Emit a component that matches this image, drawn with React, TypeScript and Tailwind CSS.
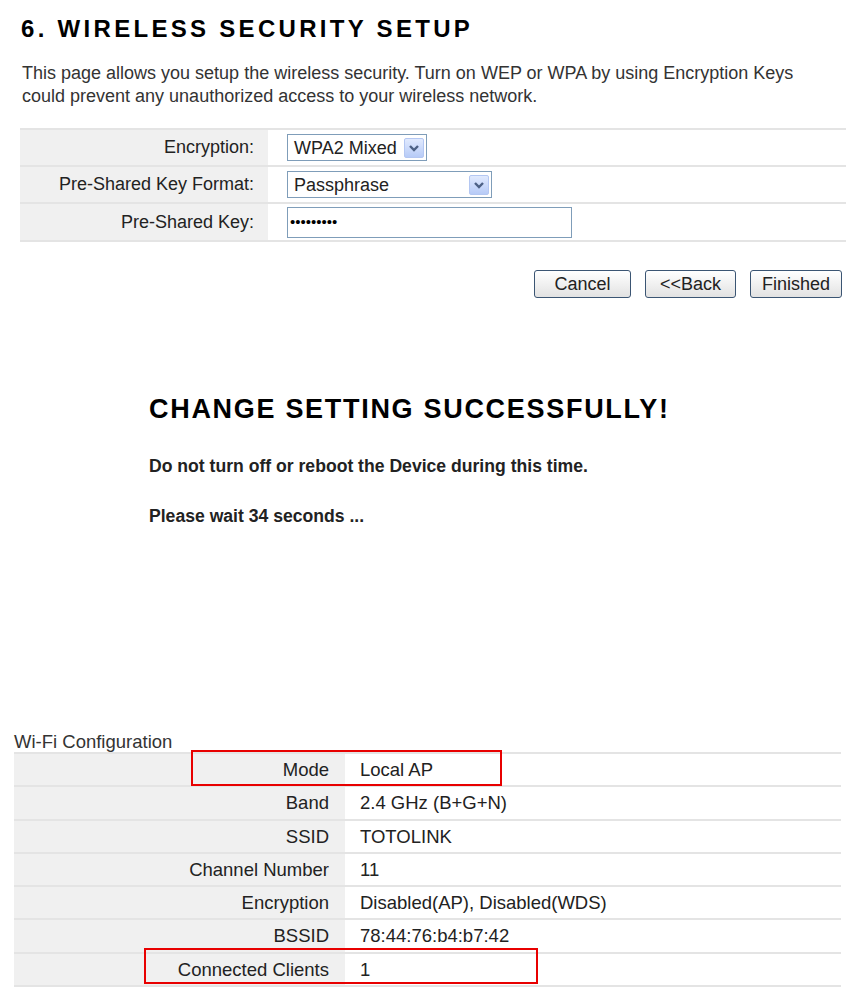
import type { ReactNode } from "react"

function Arrow() {
  return (
    <div className="w-[20px] h-[20px] mr-[2px] flex items-center justify-center rounded-[2px] border border-[#b4c7f2] bg-linear-to-b from-[#e1eafe] to-[#b7cbf7]">
      <svg width="14" height="14" viewBox="0 0 14 14">
        <path d="M3 5 L7 9 L11 5" fill="none" stroke="#4d6185" strokeWidth="2.4" />
      </svg>
    </div>
  )
}

function Select({ value, width }: { value: string; width: string }) {
  return (
    <div className={`${width} h-[27px] border border-[#7f9db9] bg-white flex items-center`}>
      <span className="flex-1 pl-[6px] text-[18px] leading-none text-[#222]">{value}</span>
      <Arrow />
    </div>
  )
}

function SetupRow({ label, height, children }: { label: string; height: string; children: ReactNode }) {
  return (
    <div className={`flex ${height} border-b-2 border-[#e4e4e4]`}>
      <div className="w-[248px] bg-[#f0f0f0] flex items-center justify-end pr-[14px] text-[18px] text-[#222]">
        {label}
      </div>
      <div className="flex-1 flex items-center pl-[19px]">{children}</div>
    </div>
  )
}

function Button({ label, width }: { label: string; width: string }) {
  return (
    <button
      className={`${width} h-[28px] border border-[#3b5573] rounded-[3px] bg-linear-to-b from-white to-[#e2e2e2] text-[18px] leading-none text-[#222]`}
    >
      {label}
    </button>
  )
}

const wifiRows = [
  { label: "Mode", value: "Local AP", h: "h-[33px]" },
  { label: "Band", value: "2.4 GHz (B+G+N)", h: "h-[34px]" },
  { label: "SSID", value: "TOTOLINK", h: "h-[33px]" },
  { label: "Channel Number", value: "11", h: "h-[33px]" },
  { label: "Encryption", value: "Disabled(AP), Disabled(WDS)", h: "h-[33px]" },
  { label: "BSSID", value: "78:44:76:b4:b7:42", h: "h-[34px]" },
  { label: "Connected Clients", value: "1", h: "h-[33px]" },
]

export default function App() {
  return (
    <div className="w-[856px] min-h-[993px] bg-white font-['Liberation_Sans',Arial,sans-serif] text-[#222]">
      {/* Wireless security setup */}
      <div className="pt-[17px]">
        <h1 className="ml-[21px] text-[24px] leading-[24px] font-bold tracking-[3.3px] text-black">
          6. WIRELESS SECURITY SETUP
        </h1>
        <p className="ml-[22px] mt-[21px] text-[18px] leading-[23px] text-[#333]">
          This page allows you setup the wireless security. Turn on WEP or WPA by using Encryption Keys
          <br />
          could prevent any unauthorized access to your wireless network.
        </p>

        <div className="ml-[20px] mt-[20px] w-[826px] border-t-2 border-[#e4e4e4]">
          <SetupRow label="Encryption:" height="h-[37px]">
            <Select value="WPA2 Mixed" width="w-[140px]" />
          </SetupRow>
          <SetupRow label="Pre-Shared Key Format:" height="h-[37px]">
            <Select value="Passphrase" width="w-[205px]" />
          </SetupRow>
          <SetupRow label="Pre-Shared Key:" height="h-[38px]">
            <div className="w-[285px] h-[31px] border border-[#7f9db9] bg-white flex items-center pl-[2px] text-[15px] text-black">
              •••••••••
            </div>
          </SetupRow>
        </div>

        <div className="mt-[28px] pr-[14px] flex justify-end gap-[14px]">
          <Button label="Cancel" width="w-[97px]" />
          <Button label="<<Back" width="w-[91px]" />
          <Button label="Finished" width="w-[92px]" />
        </div>
      </div>

      {/* Success message */}
      <div className="ml-[149px] mt-[98px]">
        <h2 className="text-[27px] leading-[27px] font-bold tracking-[1.7px] text-black">
          CHANGE SETTING SUCCESSFULLY!
        </h2>
        <p className="mt-[33px] text-[17.6px] leading-[20px] font-bold text-[#222]">
          Do not turn off or reboot the Device during this time.
        </p>
        <p className="mt-[30px] text-[17.6px] leading-[20px] font-bold text-[#222]">Please wait 34 seconds ...</p>
      </div>

      {/* Wi-Fi configuration */}
      <div className="relative mt-[207px] pb-[6px]">
        <div className="ml-[14px] text-[18.5px] leading-[18px] text-[#333]">Wi-Fi Configuration</div>
        <div className="ml-[14px] mt-[1px] w-[827px] border-t-2 border-[#e4e4e4]">
          {wifiRows.map((row) => (
            <div key={row.label} className={`flex ${row.h} border-b-2 border-[#e4e4e4]`}>
              <div className="w-[331px] bg-[#f0f0f0] flex items-center justify-end pr-[16px] text-[18.5px] text-[#222]">
                {row.label}
              </div>
              <div className="flex-1 flex items-center pl-[15px] text-[18.5px] text-[#222]">{row.value}</div>
            </div>
          ))}
        </div>

        {/* highlight boxes */}
        <div className="absolute left-[191px] top-[17px] w-[311px] h-[36px] border-2 border-[#e80000]" />
        <div className="absolute left-[144px] top-[215px] w-[394px] h-[36px] border-2 border-[#e80000]" />
      </div>
    </div>
  )
}
